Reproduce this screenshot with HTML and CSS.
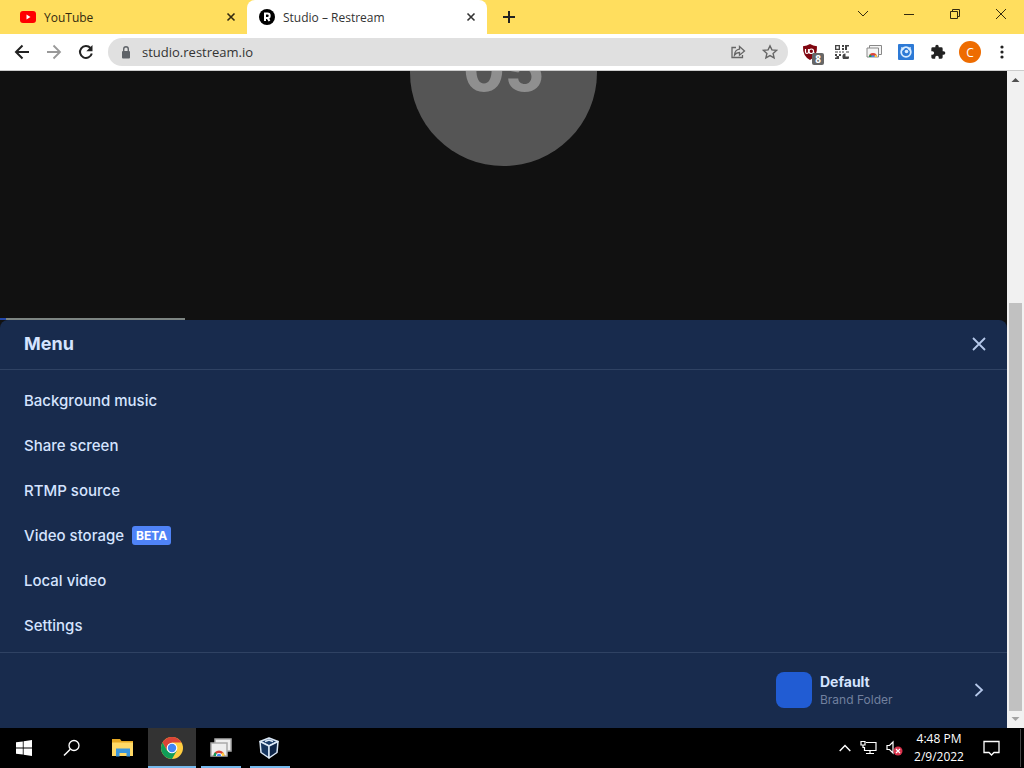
FILE: index.html
```
<!DOCTYPE html>
<html lang="en">
<head>
<meta charset="utf-8">
<title>Studio – Restream</title>
<link rel="stylesheet" href="styles.css">
</head>
<body>
<header class="tabs">
  <div class="tab">
    <svg class="fav" viewBox="0 0 16 16"><rect y="2" width="16" height="12" rx="3" fill="#f00"/><path d="M6.500 5.500v5l4-2.500z" fill="#fff"/></svg>
    <span class="tab-title">YouTube</span>
    <button class="icon-btn" aria-label="Close YouTube"><svg width="10" height="10" viewBox="0 0 10 10"><path d="M1.500 1.500l7 7m0-7l-7 7" class="ln" stroke-width="1.600"/></svg></button>
  </div>
  <div class="tab tab-active">
    <svg class="fav" viewBox="0 0 16 16"><circle cx="8" cy="8" r="8"/><path d="M6 12V4.500h2.500a2.200 2.200 0 0 1 0 4.400H6m2.500 0L10.500 12" fill="none" stroke="#fff" stroke-width="2"/></svg>
    <span class="tab-title">Studio – Restream</span>
    <button class="icon-btn" aria-label="Close Studio"><svg width="10" height="10" viewBox="0 0 10 10"><path d="M1.500 1.500l7 7m0-7l-7 7" class="ln" stroke-width="1.600"/></svg></button>
  </div>
  <button class="icon-btn new-tab" aria-label="New tab"><svg width="12" height="12" viewBox="0 0 12 12"><path d="M6 0v12M0 6h12" class="ln" stroke-width="2"/></svg></button>
  <div class="window-controls">
    <button class="icon-btn" aria-label="Search tabs"><svg width="12" height="12" viewBox="0 0 12 12"><path d="M1 3l5 5 5-5" class="ln"/></svg></button>
    <button class="icon-btn" aria-label="Minimize"><svg width="10" height="10" viewBox="0 0 10 10"><path d="M0 5.500h10" class="ln"/></svg></button>
    <button class="icon-btn" aria-label="Restore"><svg width="10" height="10" viewBox="0 0 10 10"><path d="M.5 2.500h7v7h-7zM2.500 2.500v-2h7v7h-2" class="ln"/></svg></button>
    <button class="icon-btn" aria-label="Close window"><svg width="12" height="12" viewBox="0 0 12 12"><path d="M1 1l10 10M11 1L1 11" class="ln"/></svg></button>
  </div>
</header>
<nav class="toolbar" aria-label="Browser">
  <button class="icon-btn" aria-label="Back"><svg width="16" height="16" viewBox="0 0 16 16"><path d="M15 8H2m6.500-6.500L2 8l6.500 6.500" class="ln" stroke-width="2"/></svg></button>
  <button class="icon-btn muted" aria-label="Forward"><svg width="16" height="16" viewBox="0 0 16 16"><path d="M1 8h13M7.500 1.500L14 8l-6.500 6.500" class="ln" stroke-width="1.800"/></svg></button>
  <button class="icon-btn" aria-label="Reload"><svg width="16" height="16" viewBox="0 0 16 16"><path d="M13.800 9.500A6 6 0 1 1 12.500 4" class="ln" stroke-width="2"/><path d="M14.500 1v6.200H8.300z" fill="currentColor"/></svg></button>
  <div class="address">
    <svg width="10" height="13" viewBox="0 0 10 13"><rect x="1" y="5" width="8" height="7.500" rx="1" fill="#5f6368"/><path d="M2.700 5V3a2.300 2.300 0 0 1 4.600 0v2" fill="none" stroke="#5f6368" stroke-width="1.400"/></svg>
    <input class="url" type="text" value="studio.restream.io" aria-label="Address">
    <button class="icon-btn gray" aria-label="Share"><svg width="16" height="16" viewBox="0 0 16 16"><path d="M6 3.500H2v10h10.500V11M9.500 2.500v2.700C6 5.700 4.700 8 4.500 11 6 9 7.500 8.500 9.500 8.500v2.700L14.500 7z" class="ln" stroke-width="1.300"/></svg></button>
    <button class="icon-btn gray" aria-label="Bookmark"><svg width="16" height="16" viewBox="0 0 16 16"><path d="M8 1.800l1.900 4.100 4.600.5-3.400 3 1 4.500L8 11.600l-4.100 2.300 1-4.500-3.400-3 4.600-.5z" class="ln" stroke-width="1.400"/></svg></button>
  </div>
  <button class="icon-btn ext" aria-label="Content blocker"><svg width="16" height="16" viewBox="0 0 16 16"><path d="M8 0q3 2 7 2.200Q15.500 12 8 16 .5 12 1 2.200 5 2 8 0z" fill="#800610"/><path d="M3.500 5v3q0 1.500 1.500 1.500T6.500 8V5m2.800 0a2 2 0 1 1 0 4.500A2 2 0 0 1 9.300 5m2.500 4h1" fill="none" stroke="#fff" stroke-width="1.200"/></svg><span class="count">8</span></button>
  <button class="icon-btn" aria-label="QR code"><svg width="14" height="14" viewBox="0 0 14 14" fill="#444"><path d="M0 0h5v5H0zm1.300 1.300v2.400h2.400V1.300zM7 0h2v2H7zm3 0h4v1.500h-2V5h-2zM7 3h2v2H7zM0 6.500h3v1H0zm4 0h2v1H4zm3 0h2v1H7zm4 0h3v1h-3zM0 9h2v2h2v3H0v-1.500h1.500V11H0zm4 0h2v2H4z" fill-rule="evenodd"/><path d="M10.500 8.500v3H14a3.300 3.300 0 1 1-3.500-3z"/></svg></button>
  <button class="icon-btn" aria-label="Remote desktop"><svg width="16" height="16" viewBox="0 0 16 16"><path d="M3.500 4V1.500h12v9H13" fill="#f5f5f5" stroke="#888"/><path d="M1 4h11.500v9H1z" fill="#f5f5f5" stroke="#888"/><path d="M3 13a4 4 0 0 1 8 0z" fill="#db4437"/><path d="M3 13a4 4 0 0 1 1-2.600L7 13z" fill="#0f9d58"/><path d="M11 13a4 4 0 0 0-1-2.600L7 13z" fill="#ffcd40"/><path d="M5.200 13a1.800 1.800 0 0 1 3.600 0z" fill="#4285f4"/></svg></button>
  <button class="icon-btn" aria-label="Video extension"><svg width="16" height="16" viewBox="0 0 16 16"><rect width="16" height="16" rx="1" fill="#2d7ad6"/><circle cx="8" cy="8" r="4.800" fill="none" stroke="#d9ecff" stroke-width="1.800"/><path d="M3 3l4 1.500L4 7zM13 3L9 4.500 12 7z" fill="#d9ecff"/><circle cx="8.500" cy="7.500" r="1.800" fill="#d9ecff"/></svg></button>
  <button class="icon-btn" aria-label="Extensions"><svg width="16" height="16" viewBox="0 0 24 24"><path fill="currentColor" d="M20.500 11H19V7a2 2 0 0 0-2-2h-4V3.500a2.500 2.500 0 0 0-5 0V5H4a2 2 0 0 0-2 2v3.800h1.500a2.700 2.700 0 0 1 0 5.400H2V20a2 2 0 0 0 2 2h3.800v-1.500a2.700 2.700 0 0 1 5.400 0V22H17a2 2 0 0 0 2-2v-4h1.500a2.500 2.500 0 0 0 0-5z"/></svg></button>
  <button class="profile" aria-label="Profile">C</button>
  <button class="icon-btn" aria-label="More"><svg width="4" height="14" viewBox="0 0 4 14" fill="#222"><circle cx="2" cy="2" r="1.600"/><circle cx="2" cy="7" r="1.600"/><circle cx="2" cy="12" r="1.600"/></svg></button>
</nav>
<div class="viewport">
  <main class="page">
    <section class="stage">
      <div class="avatar">05</div>
      <div class="strip"></div>
    </section>
    <section class="sheet">
      <div class="sheet-head">
        <h1>Menu</h1>
        <button class="icon-btn" aria-label="Close menu"><svg width="14" height="14" viewBox="0 0 14 14"><path d="M1 1l12 12M13 1L1 13" class="ln" stroke-width="1.800"/></svg></button>
      </div>
      <div class="items">
        <button class="item">Background music</button>
        <button class="item">Share screen</button>
        <button class="item">RTMP source</button>
        <button class="item">Video storage <span class="beta">BETA</span></button>
        <button class="item">Local video</button>
        <button class="item">Settings</button>
      </div>
      <div class="sheet-foot">
        <button class="folder">
          <span class="swatch"></span>
          <span class="folder-text"><b>Default</b><small>Brand Folder</small></span>
          <svg width="10" height="16" viewBox="0 0 10 16"><path d="M1.500 2l6.500 6-6.500 6" class="ln" stroke-width="1.800"/></svg>
        </button>
      </div>
    </section>
  </main>
  <div class="scrollbar" aria-hidden="true">
    <svg width="17" height="17" viewBox="0 0 17 17"><path d="M4.500 11L8.500 7l4 4z" fill="#505050"/></svg>
    <div class="track"><div class="thumb"></div></div>
    <svg width="17" height="17" viewBox="0 0 17 17"><path d="M4.500 6l4 4 4-4z" fill="#a3a3a3"/></svg>
  </div>
</div>
<footer class="taskbar">
  <button class="task" aria-label="Start"><svg width="16" height="16" viewBox="0 0 16 16" fill="#fff"><path d="M0 2.300L6.800 1.400V7.600H0zM7.600 1.300L16 0v7.600H7.600zM0 8.400h6.800v6.200L0 13.700zM7.600 8.400H16V16l-8.400-1.300z"/></svg></button>
  <button class="task" aria-label="Search"><svg width="18" height="18" viewBox="0 0 18 18"><circle cx="11" cy="6.500" r="5" class="ln" stroke-width="1.300"/><path d="M7.300 10.200L1 16.500" class="ln" stroke-width="1.500"/></svg></button>
  <button class="task task-files" aria-label="File Explorer"><svg width="22" height="20" viewBox="0 0 22 20"><path d="M0 1h8l1.500 2H21v15H0z" fill="#e5a823"/><path d="M0 4.500h21V18H0z" fill="#ffd966"/><path d="M4 10.500h14v8h-3.500V15h-7v3.500H4z" fill="#3a96dd"/></svg></button>
  <button class="task task-active" aria-label="Chrome"><svg width="22" height="22" viewBox="0 0 22 22"><circle cx="11" cy="11" r="11" fill="#ffcd40"/><path d="M1.500 5.500A11 11 0 0 1 20.500 5.500H11L6.200 13.700z" fill="#db4437"/><path d="M1.500 5.500A11 11 0 0 0 11 22l4.800-8.200H6.200z" fill="#0f9d58"/><circle cx="11" cy="11" r="5.300" fill="#fff"/><circle cx="11" cy="11" r="4.200" fill="#4285f4"/></svg></button>
  <button class="task task-open" aria-label="Remote desktop"><svg width="22" height="20" viewBox="0 0 22 20"><path d="M5 5V1h16v12h-4" fill="#eee" stroke="#aaa" stroke-width="1.500"/><path d="M1 5h16v13H1z" fill="#eee" stroke="#aaa" stroke-width="1.500"/><path d="M3.500 18a5.500 5.500 0 0 1 11 0z" fill="#db4437"/><path d="M3.500 18a5.500 5.500 0 0 1 1.500-3.800L9 18z" fill="#0f9d58"/><path d="M14.500 18a5.500 5.500 0 0 0-1.500-3.800L9 18z" fill="#ffcd40"/><path d="M6 18a3 3 0 0 1 6 0z" fill="#fff"/><path d="M6.800 18a2.200 2.200 0 0 1 4.400 0z" fill="#4285f4"/></svg></button>
  <button class="task task-open task-box" aria-label="VirtualBox"><svg width="20" height="22" viewBox="0 0 20 22" stroke="#dce9f7" stroke-width="1.500" stroke-linejoin="round"><path d="M10 1l9 3.500L10 9 1 4.500z" fill="#1c3e6b"/><path d="M1 4.500L10 9v12l-8-5.500z" fill="#17365f"/><path d="M19 4.500L10 9v12l8-5.500z" fill="#0e2547"/><path d="M6 4.500l4-1.500 4 1.500" fill="none"/></svg></button>
  <div class="tray">
    <svg width="12" height="8" viewBox="0 0 12 8"><path d="M.7 7L6 1.500 11.300 7" class="ln" stroke-width="1.400"/></svg>
    <svg width="17" height="16" viewBox="0 0 17 16"><path d="M6 2.500h10v8H4.500V7M10 10.500v3M6 13.500h8M1 1.500h4v3.500H1zM3 5v2.500h1.500" class="ln" stroke-width="1.200"/></svg>
    <svg width="17" height="16" viewBox="0 0 17 16"><path d="M1 5.500h2.500L7 2v11L3.500 9.500H1z" class="ln" stroke-width="1.200"/><circle cx="12" cy="11" r="4.500" fill="#d9334c"/><path d="M10 9l4 4m0-4l-4 4" class="ln" stroke-width="1.200"/></svg>
    <time class="clock">4:48 PM<br>2/9/2022</time>
    <svg width="17" height="17" viewBox="0 0 17 17"><path d="M1 1.500h15v11h-5L8.500 15 6 12.500H1z" class="ln" stroke-width="1.300"/></svg>
  </div>
  <div class="show-desktop"></div>
</footer>
</body>
</html>
```
FILE: styles.css
```
* { box-sizing: border-box; }
body { margin: 0; height: 100vh; display: flex; flex-direction: column; overflow: hidden; background: #111; font-family: "Open Sans", "Noto Sans", sans-serif; font-size: 12px; }
button { border: 0; padding: 0; background: none; font: inherit; color: inherit; text-align: left; }
svg { display: block; flex: none; }
.ln { fill: none; stroke: currentColor; }
.icon-btn { width: 16px; height: 16px; display: flex; align-items: center; justify-content: center; flex: none; }

.tabs { height: 34px; display: flex; background: #ffde5e; color: #332a10; flex: none; }
.tab { width: 247px; display: flex; align-items: center; gap: 8px; padding: 0 8px 0 20px; }
.tab-active { width: 240px; padding-left: 12px; background: #fff; border-radius: 8px 8px 0 0; color: #333; }
.tab-title { flex: 1; }
.fav { width: 16px; height: 16px; }
.new-tab { margin: 9px 0 0 14px; color: #222; }
.window-controls { margin-left: auto; display: flex; gap: 30px; padding: 6px 15px 0 0; }

.toolbar { height: 37px; display: flex; align-items: center; gap: 16px; padding: 0 20px 0 14px; background: #fff; border-bottom: 1px solid #ccc; color: #222; flex: none; }
.muted { color: #999; }
.gray { color: #666; }
.address { flex: 1; height: 28px; margin: 0 -2px; padding: 0 10px 0 13px; display: flex; align-items: center; gap: 16px; background: #e0e0e0; border-radius: 14px; min-width: 0; }
.url { flex: 1; min-width: 0; border: 0; padding: 0; margin-left: -5px; background: none; font: 13px "Open Sans", "Noto Sans", sans-serif; color: #333; }
.ext { position: relative; }
.count { position: absolute; left: 10px; top: 9px; width: 12px; height: 12px; border-radius: 2px; background: #666; color: #fff; font-size: 10px; font-weight: 700; line-height: 12px; text-align: center; }
.profile { width: 22px; height: 22px; margin: 0 -3px; border-radius: 50%; background: #ee6c00; color: #fff; text-align: center; font-size: 12px; }
.toolbar > .icon-btn:last-child { width: 4px; margin-left: 6px; }

.viewport { flex: 1; min-height: 0; display: flex; }
.page { flex: 1; display: flex; flex-direction: column; background: #111; font-family: Inter, sans-serif; }
.stage { flex: 1; min-height: 0; overflow: hidden; display: flex; flex-direction: column; align-items: center; justify-content: space-between; }
.avatar { width: 187px; height: 187px; margin-top: -92px; border-radius: 50%; background: #555; color: #8f8f8f; font-size: 60px; font-weight: 800; line-height: 180px; text-align: center; flex: none; }
.strip { align-self: flex-start; width: 185px; height: 2px; background: #7d8582; border-left: 6px solid #2347a8; }
.sheet { background: #182b4d; color: #d5e4ff; border-radius: 8px 8px 0 0; }
.sheet-head { height: 50px; display: flex; align-items: center; justify-content: space-between; padding: 0 20px 2px 24px; border-bottom: 1px solid #2f4263; }
.sheet-head .icon-btn { color: #b5c8ea; }
h1 { margin: 0; font-size: 18px; line-height: 22px; font-weight: 700; }
.items { padding: 8px 0 4px; }
.item { width: 100%; height: 45px; padding: 0 24px; display: flex; align-items: center; gap: 8px; font-size: 15px; font-weight: 500; }
.beta { padding: 0 4px; border-radius: 3px; background: #4f83f7; color: #fff; font-size: 12px; font-weight: 700; line-height: 19px; }
.sheet-foot { height: 76px; border-top: 1px solid #2f4263; display: flex; justify-content: flex-end; padding: 0 23px 2px 22px; }
.folder { width: 208px; display: flex; align-items: center; gap: 8px; }
.swatch { width: 36px; height: 36px; border-radius: 8px; background: #215cd3; }
.folder-text { flex: 1; display: flex; flex-direction: column; padding-top: 2px; }
.folder-text b { font-size: 14px; line-height: 18px; }
.folder-text small { font-size: 12px; line-height: 18px; color: #71809e; }
.folder svg { color: #b5c8ea; }

.scrollbar { width: 17px; display: flex; flex-direction: column; background: #f1f1f1; }
.track { flex: 1; display: flex; flex-direction: column; justify-content: flex-end; padding: 0 2px; }
.thumb { height: 65.500%; background: #c1c1c1; }

.taskbar { height: 40px; display: flex; background: #000; color: #fff; flex: none; }
.task { width: 48px; display: flex; align-items: center; justify-content: center; border-bottom: 2px solid transparent; border-top: 2px solid transparent; }
.task-files { width: 52px; padding-left: 2px; }
.task-active { background: #333; border-top-color: #333; border-bottom-color: #76b9ed; }
.task-open { width: 40px; margin-left: 5px; border-bottom-color: #76b9ed; }
.task-box { margin-left: 9px; padding-right: 3px; }
.tray { margin-left: auto; display: flex; align-items: center; gap: 9px; padding-right: 20px; }
.clock { width: 54px; margin-right: 8px; font-size: 12px; line-height: 18px; text-align: center; }
.show-desktop { width: 4px; margin: 1px 0; border-left: 1px solid #444; }
```
